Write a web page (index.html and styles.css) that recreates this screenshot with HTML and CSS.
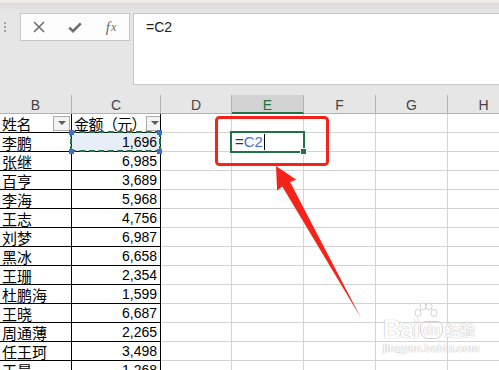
FILE: index.html
```html
<!DOCTYPE html>
<html lang="zh-CN">
<head>
    <meta charset="UTF-8">
    <meta name="viewport" content="width=device-width, initial-scale=1.0">
    <title>Excel 公式引用</title>
    <link rel="stylesheet" href="styles.css">
</head>
<body>

<div class="top-strip"></div>

<div class="formula-bar">
    <div class="grip"><span></span><span></span><span></span></div>
    <div class="tools">
        <span class="tool">
            <svg width="12" height="12" viewBox="0 0 12 12"><path d="M1 1 L11 11 M11 1 L1 11" stroke="#6e6e6e" stroke-width="1.6" fill="none"/></svg>
        </span>
        <span class="tool">
            <svg width="14" height="11" viewBox="0 0 14 11"><path d="M1.2 5.6 L5 9.2 L12.8 1.4" stroke="#6e6e6e" stroke-width="2.6" fill="none"/></svg>
        </span>
        <span class="tool fx"><i>f</i><i class="small">x</i></span>
    </div>
    <div class="formula-input">=C2</div>
</div>

<div class="sheet" id="sheet">
    <div class="row head">
        <div class="cell">B</div>
        <div class="cell">C</div>
        <div class="cell">D</div>
        <div class="cell sel">E</div>
        <div class="cell">F</div>
        <div class="cell">G</div>
        <div class="cell">H</div>
    </div>
</div>

<!-- copy range around C2 -->
<div class="copy-range"></div>
<span class="handle" style="left:69px; top:130px"></span>
<span class="handle" style="left:157px; top:130px"></span>
<span class="handle" style="left:69px; top:149px"></span>
<span class="handle" style="left:157px; top:149px"></span>

<!-- cell being edited -->
<div class="active-cell"></div>
<span class="fill-handle"></span>

<svg class="marks" width="499" height="370" viewBox="0 0 499 370">
    <rect x="216.5" y="117.5" width="111" height="47" rx="3" fill="none" stroke="#f5231a" stroke-width="3"/>
    <polygon fill="#f5231a" points="276,166 296.3,179.8 290.1,182.1 361,318 282.3,186.5 277.1,190.6"/>
</svg>

<div class="watermark">
    <svg class="paw" width="26" height="18" viewBox="0 0 26 18">
        <g fill="#fff" stroke="#d2d2d2" stroke-width="1">
            <ellipse cx="5" cy="11" rx="3" ry="3.6"/>
            <ellipse cx="10" cy="4.5" rx="3" ry="3.6"/>
            <ellipse cx="16" cy="4.5" rx="3" ry="3.6"/>
            <ellipse cx="21" cy="11" rx="3" ry="3.6"/>
        </g>
    </svg>
    <div class="wm-logo"><span class="bai">Bai</span><span class="du">du</span><span class="jy">经验</span></div>
    <div class="wm-url">jingyan.baidu.com</div>
</div>

<script>
    let rows = [
        ["姓名", "金额（元）"],
        ["李鹏", "1,696"],
        ["张继", "6,985"],
        ["百亨", "3,689"],
        ["李海", "5,968"],
        ["王志", "4,756"],
        ["刘梦", "6,987"],
        ["黑冰", "6,658"],
        ["王珊", "2,354"],
        ["杜鹏海", "1,599"],
        ["王晓", "6,687"],
        ["周通薄", "2,265"],
        ["任王珂", "3,498"],
        ["王晨", "1,268"]
    ];

    let sheet = document.getElementById("sheet");

    rows.forEach((item, i) => {
        let row = document.createElement("div");
        row.className = "row";

        if (i === 0) {
            row.innerHTML =
                '<div class="cell tb name title"><span>' + item[0] + '</span><span class="filter"></span></div>' +
                '<div class="cell tb name title"><span>' + item[1] + '</span><span class="filter"></span></div>';
        } else {
            let picked = i === 1 ? " picked" : "";
            row.innerHTML =
                '<div class="cell tb name">' + item[0] + '</div>' +
                '<div class="cell tb num' + picked + '">' + item[1] + '</div>';
        }

        // empty cells D..H, E2 holds the formula being typed
        for (let c = 0; c < 5; c++) {
            if (i === 1 && c === 1) {
                row.innerHTML += '<div class="cell editing"><span class="eq">=</span><span class="ref">C2</span><span class="caret"></span></div>';
            } else {
                row.innerHTML += '<div class="cell"></div>';
            }
        }

        sheet.appendChild(row);
    });
</script>

</body>
</html>
```

FILE: styles.css
```css
body {
    margin: 0;
    width: 499px;
    height: 370px;
    overflow: hidden;
    position: relative;
    background: #e6e6e6;
    font-family: "Liberation Sans", "Noto Sans CJK SC", sans-serif;
}

.top-strip {
    height: 13px;
    background: linear-gradient(#f1eee9 0, #f1eee9 2px, #dcdcdc 3px, #e6e6e6 13px);
}

.formula-bar {
    display: flex;
    height: 82px;
}

.grip {
    width: 20px;
    box-sizing: border-box;
    padding: 9px 0 0 4px;
    display: flex;
    flex-direction: column;
    gap: 2px;
}

.grip span {
    width: 2px;
    height: 2px;
    background: #a3a3a3;
}

.tools {
    width: 110px;
    height: 28px;
    box-sizing: border-box;
    border: 1px solid #c6c6c6;
    background: #fdfdfd;
    display: flex;
}

.tool {
    width: 36px;
    display: flex;
    align-items: center;
    justify-content: center;
}

.fx {
    font-family: "Liberation Serif", serif;
    font-size: 15px;
    color: #6a6a6a;
    padding-top: 1px;
}

.fx .small {
    font-size: 12px;
    margin-left: 1px;
}

.formula-input {
    margin-left: 3px;
    flex: 1 0 auto;
    height: 72px;
    box-sizing: border-box;
    border: 1px solid #c6c6c6;
    border-right: none;
    background: #fff;
    padding: 5px 12px;
    font-size: 14px;
    line-height: 16px;
    color: #222;
}

.sheet {
    background: #fff;
}

.row {
    display: grid;
    grid-template-columns: 72px 89px 71px 72px 72px 72px 72px;
    height: 19px;
}

.cell {
    box-sizing: border-box;
    border-right: 1px solid #d4d4d4;
    border-bottom: 1px solid #d4d4d4;
    white-space: nowrap;
    font-size: 14px;
    line-height: 18px;
    color: #000;
}

.head {
    background: #e6e6e6;
}

.head .cell {
    border-color: #b1b1b1;
    text-align: center;
    color: #444;
    line-height: 21px;
    overflow: hidden;
}

.head .sel {
    background: #d2d2d2;
    color: #217346;
    border-bottom: 2px solid #217346;
}

.tb {
    border-right-color: #000;
    border-bottom-color: #000;
}

.name {
    font-family: "Noto Sans CJK SC", sans-serif;
    font-size: 15px;
    line-height: 17px;
    padding: 1px 0 0 2px;
}

.title {
    display: flex;
    align-items: center;
    justify-content: space-between;
    padding: 0 1px 0 2px;
    letter-spacing: -0.6px;
    overflow: hidden;
}

.filter {
    flex: none;
    width: 17px;
    height: 15px;
    box-sizing: border-box;
    border: 1px solid #acacac;
    background: #f3f3f3;
    display: flex;
    align-items: center;
    justify-content: center;
}

.filter::after {
    content: "";
    border-left: 4px solid transparent;
    border-right: 4px solid transparent;
    border-top: 4px solid #5e5e5e;
}

.num {
    text-align: right;
    padding-right: 3px;
}

.picked {
    background: #e8eef8;
}

.editing {
    padding-left: 3px;
    font-size: 15px;
    display: flex;
    align-items: center;
}

.eq {
    color: #333;
}

.ref {
    color: #3b73d6;
}

.caret {
    width: 1px;
    height: 16px;
    margin-left: 1px;
    background: #000;
}

.copy-range {
    position: absolute;
    left: 70px;
    top: 131px;
    width: 91px;
    height: 21px;
    box-sizing: border-box;
    border: 2px dashed #217346;
}

.handle {
    position: absolute;
    width: 5px;
    height: 5px;
    background: #3c6fd0;
}

.active-cell {
    position: absolute;
    left: 230px;
    top: 131px;
    width: 75px;
    height: 22px;
    box-sizing: border-box;
    border: 2px solid #217346;
}

.fill-handle {
    position: absolute;
    left: 300px;
    top: 148px;
    width: 5px;
    height: 5px;
    background: #217346;
    border: 1px solid #fff;
}

.marks {
    position: absolute;
    left: 0;
    top: 0;
}

.watermark {
    position: absolute;
    left: 383px;
    top: 302px;
    white-space: nowrap;
    color: #fdfdfd;
    text-shadow: 0 0 1px #bdbdbd, 0 0 1px #bdbdbd;
}

.paw {
    position: absolute;
    left: 30px;
    top: 0;
}

.wm-logo {
    margin-top: 14px;
    display: flex;
    align-items: flex-end;
    font-weight: bold;
    line-height: 26px;
}

.bai {
    font-size: 25px;
    letter-spacing: -1px;
}

.du {
    font-size: 14px;
    line-height: 14px;
    margin: 0 2px 3px 1px;
    padding: 1px 2px;
    border: 1px solid #d0d0d0;
    border-radius: 6px 6px 8px 8px;
}

.jy {
    font-family: "Noto Sans CJK SC", sans-serif;
    font-size: 15px;
    line-height: 24px;
}

.wm-url {
    font-size: 11px;
    font-weight: bold;
    line-height: 12px;
}
```
